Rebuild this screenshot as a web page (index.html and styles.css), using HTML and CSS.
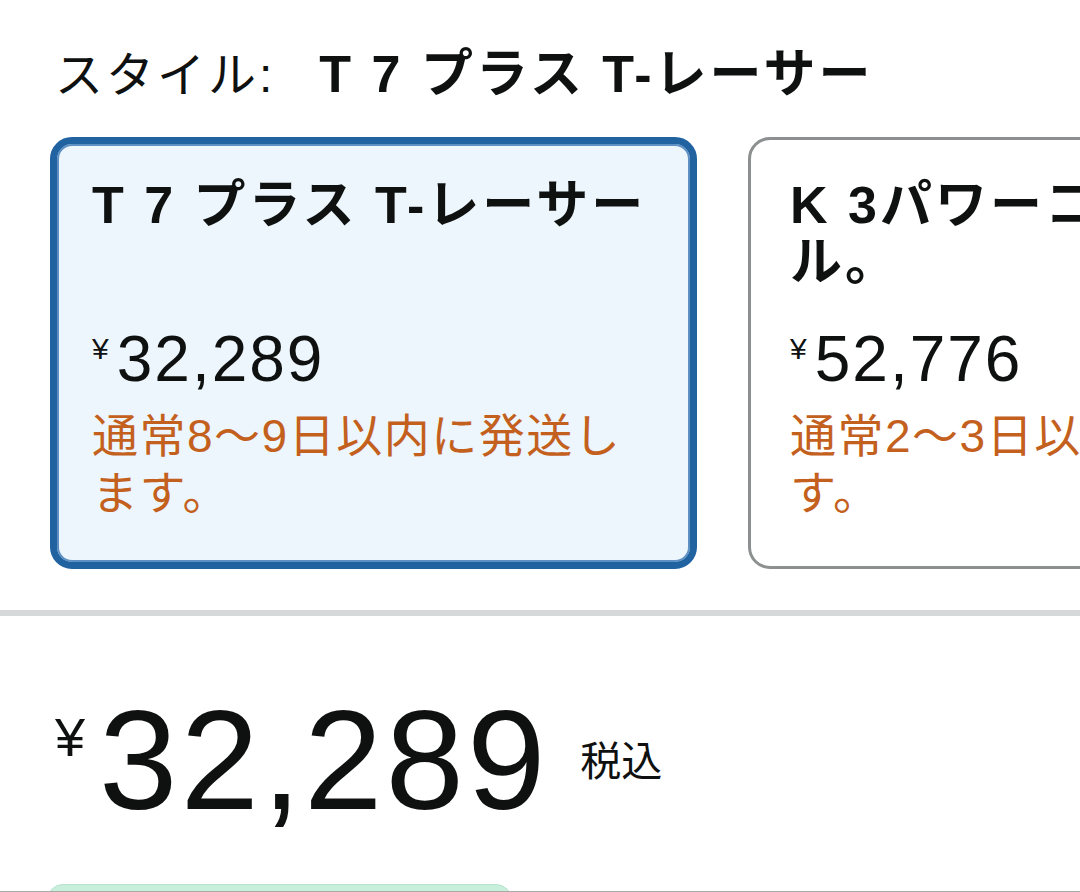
FILE: index.html
```html
<!DOCTYPE html>
<html lang="ja">
<head>
<meta charset="utf-8">
<link rel="stylesheet" href="styles.css">
</head>
<body>
<div class="page">
  <div class="style-head">
    <span class="label">スタイル:</span><span class="value">T 7 プラス T-レーサー</span>
  </div>
  <div class="swatches">
    <div class="swatch selected">
      <div class="sw-title">T 7 プラス T-レーサー</div>
      <div class="sw-price"><span class="yen">¥</span>32,289</div>
      <div class="sw-ship">通常8〜9日以内に発送します。</div>
    </div>
    <div class="swatch wide">
      <div class="sw-title">K 3パワーコントロール。</div>
      <div class="sw-price"><span class="yen">¥</span>52,776</div>
      <div class="sw-ship">通常2〜3日以内に発送します。</div>
    </div>
  </div>
  <div class="divider"></div>
  <div class="price-block">
    <span class="big-yen">¥</span><span class="big-num">32,289</span><span class="tax">税込</span>
  </div>
  <div class="green-btn"></div>
</div>
</body>
</html>
```

FILE: styles.css
```css
html, body {
  margin: 0;
  padding: 0;
  background: #ffffff;
}
.page {
  width: 1080px;
  height: 892px;
  box-sizing: border-box;
  overflow: hidden;
  border-bottom: 1px solid #a9a9a9;
  font-family: "Liberation Sans", "Noto Sans CJK JP", sans-serif;
  color: #0f1111;
}
.style-head {
  padding: 44px 0 0 55px;
  font-size: 48px;
  line-height: 60px;
  white-space: nowrap;
}
.style-head .label {
  font-weight: normal;
  letter-spacing: 3px;
  margin-right: 44px;
}
.style-head .value {
  font-weight: bold;
  font-size: 52px;
  letter-spacing: 3px;
}
.swatches {
  display: flex;
  gap: 51px;
  margin-top: 31px;
  padding-left: 50px;
  height: 432px;
}
.swatch {
  flex: 0 0 647px;
  box-sizing: border-box;
  border: 3px solid #8d9090;
  border-radius: 22px;
  background: #ffffff;
  padding: 37px 39px 0 39px;
  overflow: hidden;
}
.swatch.wide {
  flex-basis: 700px;
}
.swatch.selected {
  border: 7px solid #2162a1;
  box-shadow: inset 0 0 0 2px #5f90c4;
  background: #edf6fc;
  padding: 33px 35px 0 35px;
}
.sw-title {
  font-size: 52px;
  font-weight: bold;
  letter-spacing: 3px;
  line-height: 57px;
  height: 114px;
}
.sw-price {
  font-size: 64px;
  letter-spacing: 2px;
  line-height: 80px;
  margin-top: 28px;
}
.sw-price .yen {
  font-size: 30px;
  letter-spacing: 0;
  vertical-align: top;
  line-height: 60px;
  margin-right: 8px;
}
.sw-ship {
  color: #c4601d;
  font-size: 46px;
  letter-spacing: 1.5px;
  line-height: 57px;
  margin-top: 9px;
}
.divider {
  height: 6px;
  background: #d5d9d9;
  margin-top: 41px;
}
.price-block {
  padding-left: 55px;
  margin-top: 74px;
  height: 150px;
  display: flex;
  align-items: flex-start;
}
.big-yen {
  font-size: 54px;
  line-height: 54px;
  margin-top: 20px;
  margin-right: 14px;
}
.big-num {
  font-size: 141px;
  letter-spacing: 3px;
  line-height: 141px;
}
.tax {
  font-size: 41px;
  line-height: 41px;
  margin-top: 52px;
  margin-left: 32px;
}
.green-btn {
  margin-left: 47px;
  width: 463px;
  height: 40px;
  background: #c8eedc;
  border: 1px solid #b7e3cd;
  border-radius: 16px;
  margin-top: 44px;
}
```
